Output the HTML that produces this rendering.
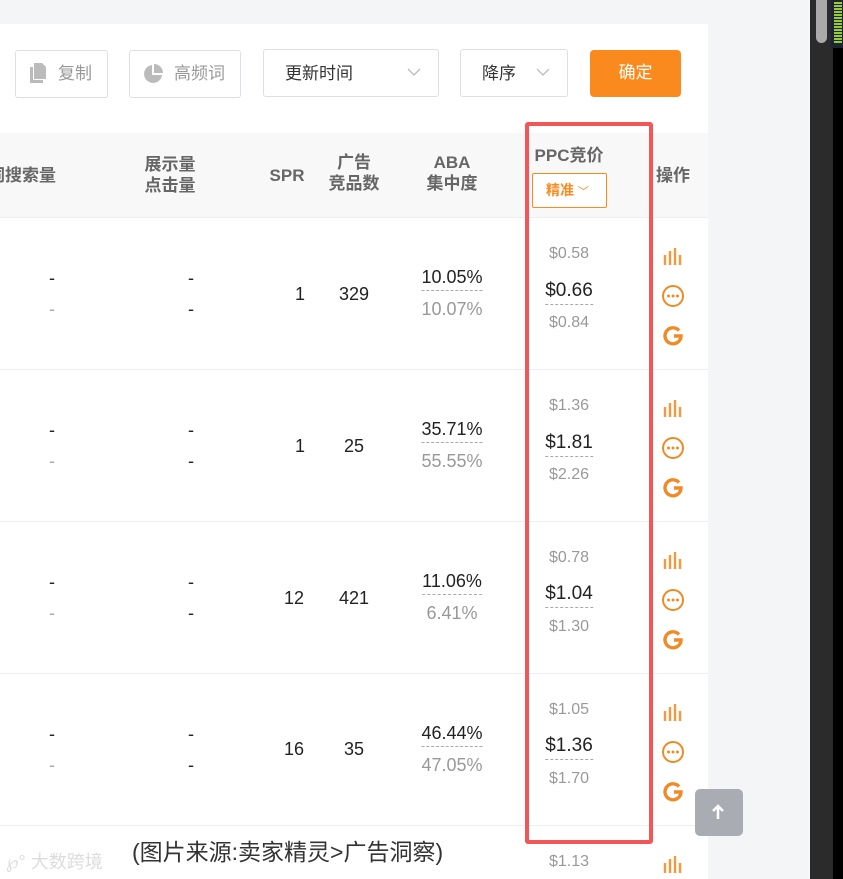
<!DOCTYPE html>
<html><head><meta charset="utf-8"><style>
*{margin:0;padding:0;box-sizing:border-box}
body{width:843px;height:879px;overflow:hidden;background:#f4f5f7;font-family:"Liberation Sans","Noto Sans CJK SC",sans-serif;position:relative}
.a{position:absolute;white-space:nowrap}
.c{transform:translateX(-50%)}
.panel{position:absolute;left:0;top:24px;width:708px;height:855px;background:#fff}
.btn{position:absolute;border:1px solid #dcdfe6;border-radius:3px;background:#fff;font-size:17px;color:#333;height:48px;line-height:46px}
.hd{position:absolute;left:0;top:133px;width:708px;height:85px;background:#f8f8f9;border-bottom:1px solid #ebeef5}
.h{position:absolute;font-size:17px;font-weight:bold;color:#666;text-align:center;line-height:21px;transform:translateX(-50%);white-space:nowrap}
.row{position:absolute;left:0;width:708px;height:152px;border-bottom:1px solid #ebeef5}
.d{font-size:18px;color:#222}
.g{color:#aaa}
.p{font-size:16px;color:#999}
.m{font-size:19px;color:#222;border-bottom:1px dashed #aaa;padding-bottom:2px}
.abam{font-size:18px;color:#222;border-bottom:1px dashed #aaa;padding-bottom:2px}
.abal{font-size:18px;color:#999}
</style></head><body>
<div class="panel"></div>
<div class="btn" style="left:15px;top:50px;width:93px;color:#999;padding-left:42px">复制</div>
<svg class="a" style="left:29px;top:62px" width="18" height="22" viewBox="0 0 18 22"><path d="M5 1h8l4 4v12H5z" fill="#bbb"/><path d="M1 5h3v13h10v3H1z" fill="#bbb"/></svg>
<div class="btn" style="left:129px;top:50px;width:112px;color:#999;padding-left:44px">高频词</div>
<svg class="a" style="left:143px;top:64px" width="20" height="20" viewBox="0 0 20 20"><path d="M9 1A9 9 0 1 0 19 11H9z" fill="#bbb"/><path d="M11 0a9 9 0 0 1 9 9h-9z" fill="#bbb"/></svg>
<div class="btn" style="left:263px;top:49px;width:176px;padding-left:21px;line-height:48px">更新时间</div>
<svg class="a" style="left:407px;top:68px" width="14" height="9"><path d="M1 1l6 6 6-6" stroke="#bbb" fill="none" stroke-width="1.3"/></svg>
<div class="btn" style="left:460px;top:49px;width:108px;padding-left:21px;line-height:48px">降序</div>
<svg class="a" style="left:536px;top:68px" width="14" height="9"><path d="M1 1l6 6 6-6" stroke="#bbb" fill="none" stroke-width="1.3"/></svg>
<div class="a" style="left:590px;top:50px;width:91px;height:47px;background:#fb8a1e;border-radius:4px;color:#fff;font-size:17px;text-align:center;line-height:45px">确定</div>

<div class="hd"></div>
<div class="h" style="left:22px;top:165px">词搜索量</div>
<div class="h" style="left:170px;top:154px">展示量<br>点击量</div>
<div class="h" style="left:287px;top:165px">SPR</div>
<div class="h" style="left:354px;top:152px">广告<br>竞品数</div>
<div class="h" style="left:452px;top:152px">ABA<br>集中度</div>
<div class="h" style="left:569px;top:145px">PPC竞价</div>
<div class="a" style="left:532px;top:173px;width:75px;height:35px;border:1px solid #fb8a1e;border-radius:2px;background:#fff;color:#fb8a1e;font-size:14px;font-weight:bold;line-height:33px;padding-left:13px">精准 <span style="font-weight:normal;font-size:11px">﹀</span></div>
<div class="h" style="left:673px;top:165px">操作</div>

<div class="row" style="top:218px"></div><div class="row" style="top:370px"></div><div class="row" style="top:522px"></div><div class="row" style="top:674px"></div>

<div class="a d c" style="left:52px;top:268px">-</div><div class="a d c g" style="left:52px;top:299px">-</div>
<div class="a d c" style="left:191px;top:268px">-</div><div class="a d c" style="left:191px;top:299px">-</div>
<div class="a d c" style="left:300px;top:284px">1</div><div class="a d c" style="left:354px;top:284px">329</div>
<div class="a abam c" style="left:452px;top:267px">10.05%</div><div class="a abal c" style="left:452px;top:299px">10.07%</div>
<div class="a p c" style="left:569px;top:245px">$0.58</div><div class="a m c" style="left:569px;top:280px">$0.66</div><div class="a p c" style="left:569px;top:314px">$0.84</div>

<div class="a d c" style="left:52px;top:420px">-</div><div class="a d c g" style="left:52px;top:451px">-</div>
<div class="a d c" style="left:191px;top:420px">-</div><div class="a d c" style="left:191px;top:451px">-</div>
<div class="a d c" style="left:300px;top:436px">1</div><div class="a d c" style="left:354px;top:436px">25</div>
<div class="a abam c" style="left:452px;top:419px">35.71%</div><div class="a abal c" style="left:452px;top:451px">55.55%</div>
<div class="a p c" style="left:569px;top:397px">$1.36</div><div class="a m c" style="left:569px;top:432px">$1.81</div><div class="a p c" style="left:569px;top:466px">$2.26</div>

<div class="a d c" style="left:52px;top:572px">-</div><div class="a d c g" style="left:52px;top:603px">-</div>
<div class="a d c" style="left:191px;top:572px">-</div><div class="a d c" style="left:191px;top:603px">-</div>
<div class="a d c" style="left:294px;top:588px">12</div><div class="a d c" style="left:354px;top:588px">421</div>
<div class="a abam c" style="left:452px;top:571px">11.06%</div><div class="a abal c" style="left:452px;top:603px">6.41%</div>
<div class="a p c" style="left:569px;top:549px">$0.78</div><div class="a m c" style="left:569px;top:583px">$1.04</div><div class="a p c" style="left:569px;top:618px">$1.30</div>

<div class="a d c" style="left:52px;top:724px">-</div><div class="a d c g" style="left:52px;top:755px">-</div>
<div class="a d c" style="left:191px;top:724px">-</div><div class="a d c" style="left:191px;top:755px">-</div>
<div class="a d c" style="left:294px;top:739px">16</div><div class="a d c" style="left:354px;top:739px">35</div>
<div class="a abam c" style="left:452px;top:723px">46.44%</div><div class="a abal c" style="left:452px;top:755px">47.05%</div>
<div class="a p c" style="left:569px;top:701px">$1.05</div><div class="a m c" style="left:569px;top:735px">$1.36</div><div class="a p c" style="left:569px;top:770px">$1.70</div>

<div class="a p c" style="left:569px;top:853px">$1.13</div>

<svg width="0" height="0" style="position:absolute"><defs>
<g id="bar"><path d="M2 8v10M7 4v14M12 1v17M17 8v10" stroke="#f39a3c" stroke-width="2.4"/></g>
<g id="dot"><circle cx="11" cy="11" r="10" stroke="#f08a24" stroke-width="2" fill="none"/><circle cx="6.5" cy="11" r="1.5" fill="#f08a24"/><circle cx="11" cy="11" r="1.5" fill="#f08a24"/><circle cx="15.5" cy="11" r="1.5" fill="#f08a24"/></g>
<g id="gg"><path d="M16 5.5A8 8 0 1 0 18 11H11" stroke="#f08a24" stroke-width="3.4" fill="none"/></g>
</defs></svg>
<svg class="a" style="left:663px;top:247px" width="20" height="20"><use href="#bar"/></svg>
<svg class="a" style="left:662px;top:285px" width="23" height="23"><use href="#dot"/></svg>
<svg class="a" style="left:663px;top:325px" width="22" height="22"><use href="#gg"/></svg>
<svg class="a" style="left:663px;top:399px" width="20" height="20"><use href="#bar"/></svg>
<svg class="a" style="left:662px;top:437px" width="23" height="23"><use href="#dot"/></svg>
<svg class="a" style="left:663px;top:477px" width="22" height="22"><use href="#gg"/></svg>
<svg class="a" style="left:663px;top:551px" width="20" height="20"><use href="#bar"/></svg>
<svg class="a" style="left:662px;top:589px" width="23" height="23"><use href="#dot"/></svg>
<svg class="a" style="left:663px;top:629px" width="22" height="22"><use href="#gg"/></svg>
<svg class="a" style="left:663px;top:703px" width="20" height="20"><use href="#bar"/></svg>
<svg class="a" style="left:662px;top:741px" width="23" height="23"><use href="#dot"/></svg>
<svg class="a" style="left:663px;top:781px" width="22" height="22"><use href="#gg"/></svg>
<svg class="a" style="left:663px;top:855px" width="20" height="20"><use href="#bar"/></svg>

<div class="a" style="left:525px;top:122px;width:128px;height:722px;border:4px solid #f25656;border-radius:3px"></div>

<div class="a" style="left:695px;top:789px;width:48px;height:47px;background:#a9acb3;border-radius:5px"></div>
<svg class="a" style="left:710px;top:803px" width="16" height="18"><path d="M8 16V3M3 8l5-5 5 5" stroke="#fff" stroke-width="2.5" fill="none"/></svg>

<div class="a" style="left:132px;top:833px;font-size:23px;color:#333">(图片来源:卖家精灵&gt;广告洞察)</div>
<div class="a" style="left:6px;top:848px;font-size:18px;color:#ddd">℘° 大数跨境</div>

<div class="a" style="left:810px;top:0;width:23px;height:879px;background:#2b2b2b"></div>
<div class="a" style="left:833px;top:0;width:10px;height:879px;background:#000"></div>
<div class="a" style="left:816px;top:0;width:11px;height:43px;background:#aaa;border-radius:0 0 6px 6px"></div>
<div class="a" style="left:831px;top:0;width:12px;height:48px;background:#1d2530"></div>
<div class="a" style="left:834px;top:2px;width:8px;height:42px;background:repeating-linear-gradient(#9c3 0 2px,#1d2530 2px 3px)"></div>
</body></html>
